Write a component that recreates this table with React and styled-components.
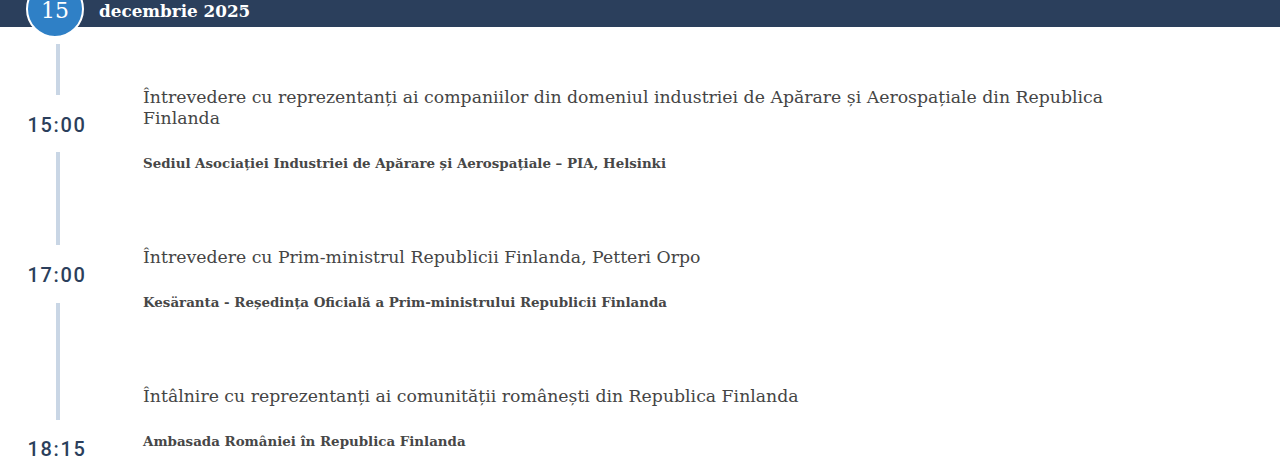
import React from "react";
import styled, { createGlobalStyle } from "styled-components";

const Global = createGlobalStyle`
  html, body { margin: 0; padding: 0; background: #fff; }
  body { font-family: "DejaVu Serif", "Liberation Serif", serif; }
`;

const Page = styled.div`
  position: relative;
  width: 1280px;
  height: 456px;
  overflow: hidden;
  background: #fff;
`;

const DateBar = styled.header`
  height: 27px;
  background: #2b3f5c;
  display: flex;
  align-items: center;
  padding-left: 99px;
`;

const MonthText = styled.span`
  color: #fff;
  font-family: "DejaVu Serif", serif;
  font-weight: 700;
  font-size: 16.8px;
  line-height: 1;
  margin-top: -5px;
`;

const DayBadge = styled.div`
  position: absolute;
  left: 26px;
  top: -20px;
  width: 54px;
  height: 40px;
  padding-bottom: 14px;
  box-sizing: content-box;
  border-radius: 50%;
  background: #2f80c6;
  border: 2px solid #fff;
  display: flex;
  align-items: flex-end;
  justify-content: center;
  color: #fff;
  font-family: "DejaVu Serif", serif;
  font-size: 22px;
  line-height: 1;
`;

const Body = styled.main`
  display: grid;
  grid-template-columns: 114px 1fr;
  column-gap: 29px;
`;

const Rail = styled.div`
  display: flex;
  flex-direction: column;
  align-items: center;
  padding-top: 17px;
`;

const Segment = styled.div`
  width: 4px;
  height: ${(p) => p.$h}px;
  background: #c9d6e5;
  margin-left: 2px;
`;

const Time = styled.div`
  height: ${(p) => p.$h}px;
  display: flex;
  align-items: center;
  justify-content: center;
  padding-top: 2px;
  box-sizing: border-box;
  font-family: "Roboto", sans-serif;
  font-weight: 500;
  font-size: 20px;
  letter-spacing: 1.7px;
  color: #2b3f5c;
`;

const Events = styled.div`
  display: flex;
  flex-direction: column;
  gap: 74px;
  padding-top: 60px;
`;

const Event = styled.article`
  display: flex;
  flex-direction: column;
  gap: 24px;
`;

const Title = styled.h3`
  margin: 0;
  max-width: 1000px;
  font-family: "DejaVu Serif", serif;
  font-weight: 400;
  font-size: 17.3px;
  line-height: 21px;
  color: #454545;
`;

const Place = styled.p`
  margin: 0;
  font-family: "DejaVu Serif", serif;
  font-weight: 700;
  font-size: 13.4px;
  line-height: 20px;
  color: #474747;
`;

const events = [
  {
    title:
      "Întrevedere cu reprezentanți ai companiilor din domeniul industriei de Apărare și Aerospațiale din Republica Finlanda",
    place: "Sediul Asociației Industriei de Apărare și Aerospațiale – PIA, Helsinki",
  },
  {
    title: "Întrevedere cu Prim-ministrul Republicii Finlanda, Petteri Orpo",
    place: "Kesäranta - Reședința Oficială a Prim-ministrului Republicii Finlanda",
  },
  {
    title: "Întâlnire cu reprezentanți ai comunității românești din Republica Finlanda",
    place: "Ambasada României în Republica Finlanda",
  },
];

export default function App() {
  return (
    <Page>
      <Global />
      <DateBar>
        <MonthText>decembrie 2025</MonthText>
      </DateBar>
      <DayBadge>15</DayBadge>
      <Body>
        <Rail>
          <Segment $h={51} />
          <Time $h={57}>15:00</Time>
          <Segment $h={93} />
          <Time $h={58}>17:00</Time>
          <Segment $h={117} />
          <Time $h={56}>18:15</Time>
        </Rail>
        <Events>
          {events.map((e) => (
            <Event key={e.title}>
              <Title>{e.title}</Title>
              <Place>{e.place}</Place>
            </Event>
          ))}
        </Events>
      </Body>
    </Page>
  );
}
